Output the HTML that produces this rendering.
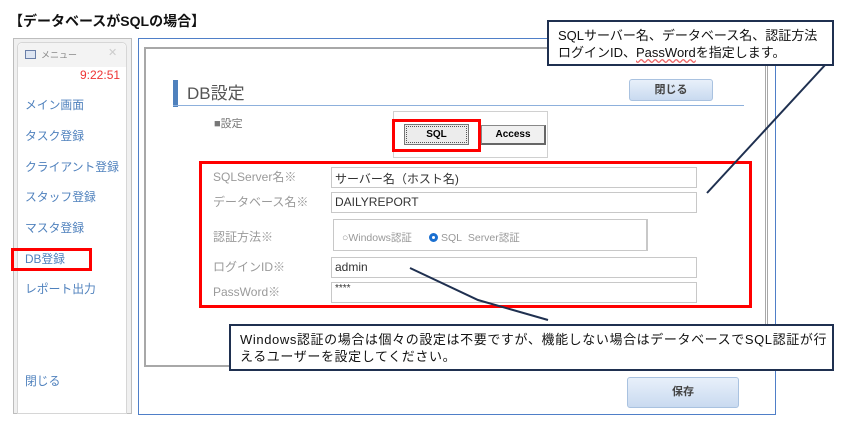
<!DOCTYPE html>
<html><head><meta charset="utf-8"><style>
*{margin:0;padding:0;box-sizing:border-box}
body{width:863px;height:428px;background:#fff;position:relative;overflow:hidden;font-family:"Liberation Sans","Noto Sans CJK JP",sans-serif}
.a{position:absolute}
.menu{color:#4f81bd;font-size:11.8px;left:25px}
.lbl{color:#9a9a9a;font-size:12px;left:213px}
.inp{left:331px;width:366px;height:21px;border:1px solid #c8c8c8;font-size:12px;color:#333;padding:2px 0 0 3px}
.call{border:2px solid #1f3050;background:#fff;font-size:13px;color:#111;line-height:17px}
</style></head><body>
<div class="a" style="left:9px;top:11px;font-size:14px;font-weight:bold;color:#111">【データベースがSQLの場合】</div>

<div class="a" style="left:13px;top:38px;width:119px;height:376px;border:1px solid #bdbdbd;background:#f0f0f0"></div>
<div class="a" style="left:17px;top:42px;width:110px;height:372px;border:1px solid #d6d6d6;border-radius:5px 5px 0 0;background:#fff"></div>
<div class="a" style="left:18px;top:43px;width:108px;height:24px;background:#f3f3f3;border-radius:5px 5px 0 0"></div>
<div class="a" style="left:25px;top:50px;width:11px;height:9px;border:1px solid #6a7fa8;background:#dde5f2"></div>
<div class="a" style="left:41px;top:48px;font-size:9px;color:#888">メニュー</div>
<div class="a" style="left:108px;top:46px;font-size:11px;color:#ccc">✕</div>
<div class="a" style="left:80px;top:68px;font-size:12px;color:#e33">9:22:51</div>
<div class="a menu" style="top:96px">メイン画面</div>
<div class="a menu" style="top:127px">タスク登録</div>
<div class="a menu" style="top:158px">クライアント登録</div>
<div class="a menu" style="top:188px">スタッフ登録</div>
<div class="a menu" style="top:219px">マスタ登録</div>
<div class="a menu" style="top:250px">DB登録</div>
<div class="a" style="left:11px;top:248px;width:81px;height:23px;border:3px solid #f00"></div>
<div class="a menu" style="top:280px">レポート出力</div>
<div class="a menu" style="top:372px">閉じる</div>

<div class="a" style="left:138px;top:38px;width:638px;height:377px;border:1px solid #4f7fc8"></div>
<div class="a" style="left:144px;top:47px;width:624px;height:320px;border:2px solid #a8a8a8;border-right:3px double #a8a8a8"></div>
<div class="a" style="left:173px;top:80px;width:5px;height:27px;background:#4f81bd"></div>
<div class="a" style="left:173px;top:105px;width:571px;height:1px;background:#8db0dc"></div>
<div class="a" style="left:187px;top:79px;font-size:17px;color:#555">DB設定</div>
<div class="a" style="left:629px;top:79px;width:84px;height:22px;border:1px solid #a9c2e0;border-radius:3px;background:linear-gradient(#e8f0fa,#c9daf0);font-size:11px;font-weight:bold;color:#444;text-align:center;line-height:20px">閉じる</div>
<div class="a" style="left:214px;top:115px;font-size:11px;color:#777">■設定</div>
<div class="a" style="left:393px;top:111px;width:155px;height:47px;border:1px solid #d0d0d0"></div>
<div class="a" style="left:404px;top:124px;width:65px;height:21px;border:1px solid #777;background:#ececec;font-size:10px;font-weight:bold;text-align:center;line-height:19px;outline:1px dotted #555;outline-offset:-3px">SQL</div>
<div class="a" style="left:392px;top:119px;width:89px;height:33px;border:3px solid #f00"></div>
<div class="a" style="left:481px;top:125px;width:65px;height:20px;border:1px solid #888;border-right:2px solid #666;border-bottom:2px solid #666;background:#f0f0f0;font-size:10px;font-weight:bold;text-align:center;line-height:17px">Access</div>

<div class="a" style="left:199px;top:161px;width:553px;height:147px;border:3px solid #f00"></div>
<div class="a lbl" style="top:168px">SQLServer名※</div>
<div class="a lbl" style="top:193px">データベース名※</div>
<div class="a lbl" style="top:228px">認証方法※</div>
<div class="a lbl" style="top:258px">ログインID※</div>
<div class="a lbl" style="top:283px">PassWord※</div>
<div class="a inp" style="top:167px">サーバー名（ホスト名)</div>
<div class="a inp" style="top:192px">DAILYREPORT</div>
<div class="a" style="left:333px;top:219px;width:315px;height:32px;border:1px solid #c8c8c8;border-right:2px solid #c8c8c8"></div>
<div class="a" style="left:342px;top:230px;font-size:10.5px;color:#999">○Windows認証</div>
<div class="a" style="left:429px;top:233px;width:9px;height:9px;border-radius:50%;border:3px solid #1a6fd0"></div>
<div class="a" style="left:441px;top:230px;font-size:10.5px;color:#999">SQL&nbsp; Server認証</div>
<div class="a inp" style="top:257px">admin</div>
<div class="a inp" style="top:282px;font-size:10px;padding-top:0">****</div>

<div class="a" style="left:627px;top:377px;width:112px;height:31px;border:1px solid #a9c2e0;border-radius:3px;background:linear-gradient(#e8f0fa,#c9daf0);font-size:11px;font-weight:bold;color:#444;text-align:center;line-height:29px">保存</div>

<svg class="a" style="left:0;top:0" width="863" height="428"><g stroke="#1f3050" stroke-width="2" fill="none"><path d="M826 64 L707 193"/><path d="M410 268 L478 300 L548 320"/></g></svg>

<div class="a call" style="left:547px;top:20px;width:287px;height:46px;padding:5px 0 0 9px">SQLサーバー名、データベース名、認証方法<br>ログインID、<span style="text-decoration:underline wavy #e66">PassWord</span>を指定します。</div>
<div class="a call" style="left:229px;top:324px;width:605px;height:47px;padding:5px 0 0 9px;letter-spacing:0.6px">Windows認証の場合は個々の設定は不要ですが、機能しない場合はデータベースでSQL認証が行<br>えるユーザーを設定してください。</div>
</body></html>
